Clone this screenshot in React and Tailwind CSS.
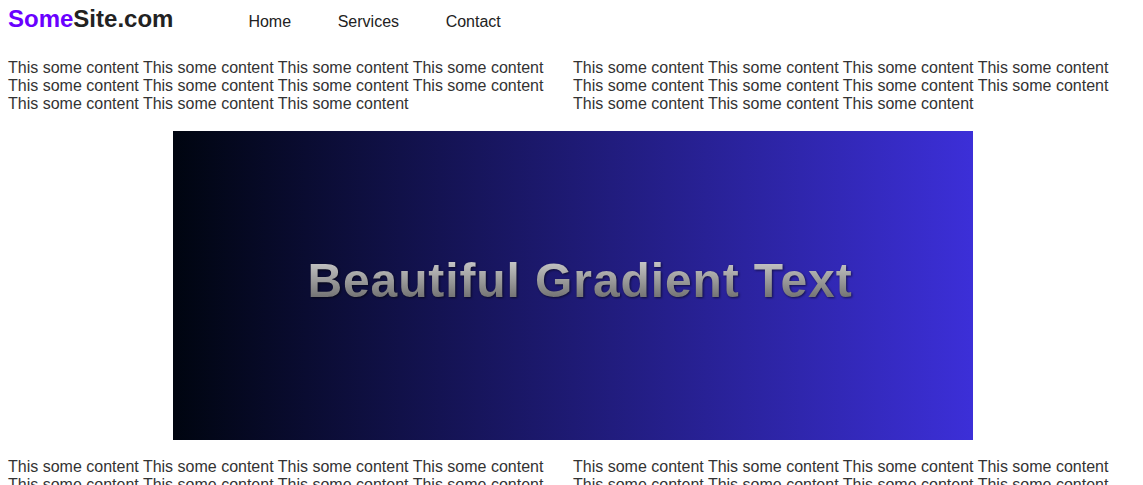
import React from "react";

const line = "This some content This some content This some content This some content This some content This some content This some content This some content This some content This some content This some content";

function TextRow() {
  return (
    <div className="grid grid-cols-[565px_1fr] px-2 text-[16px] leading-[18px] text-[#333]">
      <p>{line}</p>
      <p>{line}</p>
    </div>
  );
}

export default function App() {
  return (
    <div className="bg-white min-h-screen overflow-hidden" style={{ fontFamily: '"Liberation Sans", Arial, sans-serif' }}>
      <header className="flex items-baseline px-2 pt-[5px]">
        <div className="text-[24px] font-bold leading-[28px] text-[#222]">
          <span className="text-[#6a00ff]">Some</span>Site.com
        </div>
        <nav className="ml-[75px] flex gap-[46.6px] text-[16px] text-[#222]">
          <a>Home</a>
          <a>Services</a>
          <a>Contact</a>
        </nav>
      </header>
      <div className="mt-[25px]">
        <TextRow />
      </div>
      <div className="mt-[18px] ml-[173px] w-[800px] h-[309px] flex items-center justify-center bg-[linear-gradient(to_right,#000510,#3c2fd8)]">
        <h1
          className="ml-[14px] -mt-[9px] text-[48px] font-bold tracking-[0.9px] leading-none bg-[linear-gradient(to_bottom,#d0d0d0,#626262)] bg-clip-text text-transparent [filter:drop-shadow(1px_1px_1px_rgba(0,0,0,0.55))]"
        >
          Beautiful Gradient Text
        </h1>
      </div>
      <div className="mt-[18px]">
        <TextRow />
      </div>
    </div>
  );
}
